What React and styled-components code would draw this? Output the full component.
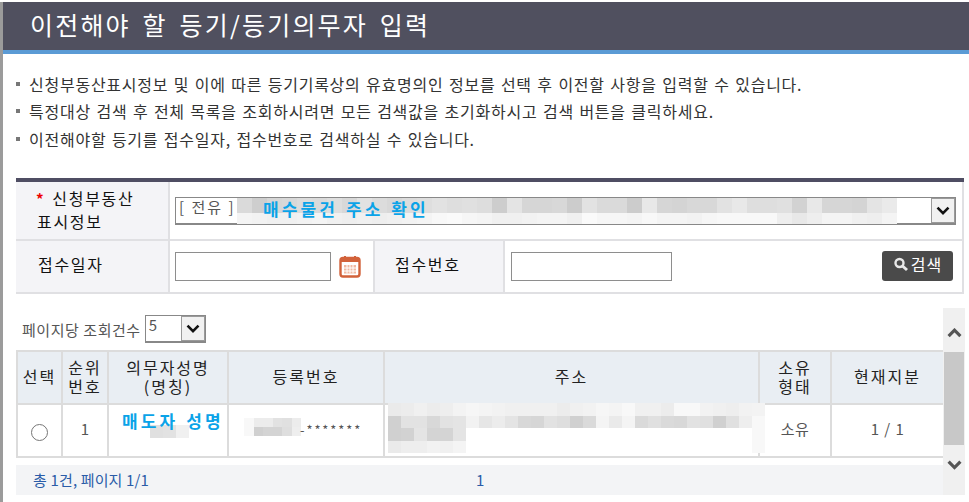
import React from "react";
import styled, { createGlobalStyle } from "styled-components";

const GlobalStyle = createGlobalStyle`
  html, body {
    margin: 0;
    padding: 0;
    background: #fff;
    overflow: hidden;
  }
  * {
    box-sizing: border-box;
  }
  body {
    font-family: "Noto Sans CJK KR", "Noto Sans", sans-serif;
    color: #333;
  }
`;

// styles
const Frame = styled.div`
  margin-top: 2px;
  width: 969px;
  height: 500px;
  border-left: 3px solid #9b9b9b;
  overflow: hidden;
`;
const Header = styled.h1`
  margin: 0;
  height: 52px;
  padding: 0 0 0 27px;
  background: #50505f;
  border-bottom: 4px solid #5b9bd5;
  color: #fff;
  font-size: 25px;
  font-weight: 400;
  letter-spacing: 2.2px;
  word-spacing: 4px;
  line-height: 44px;
`;
const Notes = styled.ul`
  list-style: none;
  margin: 0;
  padding: 16px 0 0 13px;
  height: 124px;
`;
const Note = styled.li`
  display: flex;
  align-items: center;
  gap: 9px;
  height: 27.5px;
  font-size: 16px;
  letter-spacing: 0.75px;
  word-spacing: 1.2px;
  color: #333;
  white-space: nowrap;
  &::before {
    content: "";
    width: 4px;
    height: 4px;
    background: #777;
    flex: none;
  }
`;
const SearchForm = styled.table`
  margin-left: 13px;
  width: 948px;
  height: 116px;
  table-layout: fixed;
  border-collapse: collapse;
  border-top: 4px solid #4f4e63;
  border-bottom: 2px solid #5a5a66;
  border-right: 1px solid #ddd;
`;
const Label = styled.th`
  height: 53px;
  background: #f4f4f7;
  border: 2px solid #e0e0e3;
  border-left: 0;
  font-size: 16px;
  font-weight: 400;
  letter-spacing: 1.7px;
  line-height: 22px;
  text-align: left;
  padding: 0 0 5px 22px;
  color: #111;
`;
const TallLabel = styled(Label)`
  height: 59px;
  padding: 0 0 1px 21px;
`;
const WideLabel = styled(Label)`
  padding-left: 20px;
`;
const Star = styled.span`
  color: #e00;
  font-size: 15px;
  font-weight: 700;
  margin: 0 7px 0 -1px;
`;
const FieldCell = styled.td`
  border: 2px solid #e0e0e3;
  border-top: ${(p) => (p.$first ? 0 : "2px solid #e0e0e3")};
  padding: ${(p) => (p.$first ? "1px" : "0")} 0 0 ${(p) => p.$inset || 5}px;
`;
const FieldRow = styled.div`
  display: flex;
  align-items: center;
  gap: 8px;
`;
const SplitRow = styled(FieldRow)`
  justify-content: space-between;
  padding-right: 9px;
`;
const SelectBox = styled.div`
  position: relative;
  display: flex;
  justify-content: space-between;
  align-items: stretch;
  width: ${(p) => p.$width}px;
  height: ${(p) => p.$height}px;
  border: 1px solid #888;
  border-bottom-width: 2px;
  background: #fff;
  color: #555;
  font-size: 15px;
  letter-spacing: 2px;
  line-height: 18px;
  padding-left: 3px;
`;
const SelectArrow = styled.span`
  display: flex;
  align-items: center;
  justify-content: center;
  width: 24px;
  background: #f1f1f1;
  border: 1px solid #9a9a9a;
  color: #111;
`;
const TextInput = styled.input`
  width: ${(p) => p.$width}px;
  height: 29px;
  border: 1px solid #8e8e8e;
  background: #fff;
`;
const SearchButton = styled.button`
  display: flex;
  align-items: center;
  justify-content: center;
  gap: 2px;
  width: 71px;
  height: 30px;
  padding: 0 0 4px;
  border: 0;
  border-radius: 3px;
  background: #4a4a4a;
  color: #fff;
  font-family: inherit;
  font-size: 16px;
  letter-spacing: 1px;
`;
const Mosaic = styled.div`
  position: absolute;
  top: ${(p) => p.$top}px;
  left: ${(p) => p.$left}px;
  display: grid;
  grid-auto-rows: ${(p) => p.$h};
  grid-template-columns: repeat(${(p) => p.$cols}, ${(p) => p.$w}px);
`;
const Pixel = styled.i`
  display: block;
  background: ${(p) => p.$c};
`;
const Callout = styled.strong`
  position: absolute;
  top: ${(p) => p.$top}px;
  left: ${(p) => p.$left}px;
  color: #0aa3e8;
  font-size: 17px;
  font-weight: 700;
  letter-spacing: 3.1px;
  word-spacing: 1px;
  line-height: 18px;
  white-space: nowrap;
`;
const ResultArea = styled.div`
  display: flex;
  align-items: flex-start;
  margin: 14px 0 0 13px;
`;
const ResultMain = styled.div`
  width: 927px;
`;
const PageSize = styled.div`
  display: flex;
  align-items: center;
  gap: 4px;
  height: 35px;
  margin-bottom: 7px;
  padding: 7px 0 0 6px;
  font-size: 15px;
  letter-spacing: 0.55px;
  color: #555;
`;
const GridTable = styled.table`
  width: 927px;
  height: 108px;
  table-layout: fixed;
  border-collapse: collapse;
  border: 2px solid #dcdcdc;
`;
const HeadCell = styled.th`
  height: 53px;
  padding: 0 0 2px;
  background: #e9eef3;
  border: 2px solid #dcdcdc;
  font-size: 16px;
  font-weight: 400;
  letter-spacing: 2px;
  line-height: 19px;
  color: #222;
`;
const BodyCell = styled.td`
  position: relative;
  padding: 0 0 4px;
  border: 2px solid #dcdcdc;
  font-size: 15px;
  letter-spacing: 0.4px;
  word-spacing: 1px;
  text-align: center;
  color: #555;
`;
const Radio = styled.input`
  appearance: none;
  display: block;
  width: 17px;
  height: 17px;
  margin: 8px 0 0 13px;
  border: 1.5px solid #767676;
  border-radius: 50%;
  background: #fff;
`;
const Masked = styled.span`
  position: absolute;
  top: 15px;
  left: 71px;
  font-size: 13px;
  letter-spacing: 1.9px;
  color: #555;
`;
const Pager = styled.div`
  display: flex;
  align-items: center;
  height: 30px;
  margin-top: 7px;
  padding: 0 0 2px 17px;
  background: #f3f4f6;
  color: #2a5ca8;
  font-size: 15px;
  letter-spacing: 0.15px;
`;
const PagerTotal = styled.span`
  width: 443px;
`;
const Scrollbar = styled.div`
  display: flex;
  flex-direction: column;
  align-items: center;
  width: 22px;
  height: 187px;
  background: #f0f0f0;
  color: #555;
`;
const ScrollEnd = styled.div`
  display: flex;
  justify-content: center;
  align-items: ${(p) => (p.$down ? "flex-start" : "flex-end")};
  height: ${(p) => p.$height}px;
  width: 100%;
  padding: ${(p) => (p.$down ? "15px 0 0" : "0 0 14px")};
`;
const ScrollThumb = styled.div`
  width: 20px;
  height: 93px;
  background: #c8c8c8;
`;

// drawings
const Chevron = ({ up, size = 14, weight = 2.6 }) => (
  <svg width={size} height={size * 0.65} viewBox="0 0 14 9" fill="none">
    <path
      d={up ? "M1.5 7.5 7 2l5.5 5.5" : "M1.5 1.5 7 7l5.5-5.5"}
      stroke="currentColor"
      strokeWidth={weight}
    />
  </svg>
);

const CalendarIcon = () => (
  <svg width="22" height="23" viewBox="0 0 22 23" fill="none">
    <rect x="1.5" y="3" width="19" height="18.5" rx="2.5" stroke="#d2623a" strokeWidth="2.4" />
    <rect x="1" y="3" width="20" height="4" fill="#d2623a" />
    <path d="M6 1v4M16 1v4" stroke="#d2623a" strokeWidth="2" />
    <rect x="5" y="10" width="12" height="8.5" fill="#f0b9a2" />
    <path
      d="M5 13h12M5 16h12M8 10v8.5M11 10v8.5M14 10v8.5"
      stroke="#fff"
      strokeWidth="1"
    />
  </svg>
);

const SearchIcon = () => (
  <svg width="16" height="15" viewBox="0 0 16 15" fill="none">
    <circle cx="6.5" cy="6" r="4" stroke="#e8e8e8" strokeWidth="2.4" />
    <path d="m9.5 9 4.5 4" stroke="#e8e8e8" strokeWidth="3" />
  </svg>
);

const gray = (v) => `rgb(${v},${v},${v})`;

const Pixels = ({ rows, w, h, top, left }) => (
  <Mosaic $w={w} $h={h} $top={top} $left={left} $cols={rows[0].length}>
    {rows.flat().map((v, i) => (
      <Pixel key={i} $c={gray(v)} />
    ))}
  </Mosaic>
);

// data
const selectMosaic = [
  [218, 206, 214, 216, 220, 218, 222, 216, 226, 220, 216, 220, 222, 226, 222, 224, 221, 205, 228, 214, 214, 216, 204, 226, 218, 218, 204, 232, 214, 212, 216, 216, 226, 232, 222, 222, 224, 210, 232, 214, 214, 212, 228, 234],
  [244, 242, 240, 240, 242, 244, 240, 238, 240, 238, 240, 242, 244, 248, 250, 246, 244, 240, 240, 242, 244, 244, 240, 250, 246, 246, 244, 248, 244, 244, 242, 246, 248, 248, 248, 248, 238, 232, 238, 244, 244, 240, 238, 244],
];
const addressMosaic = [
  [234, 236, 240, 236, 238, 243, 246, 244, 242, 240, 240, 240, 240, 236, 240, 242, 246, 244, 248, 240, 240, 236, 248, 248, 242, 240, 238, 242, 243],
  [208, 226, 226, 216, 226, 228, 242, 230, 236, 228, 216, 214, 226, 222, 208, 218, 244, 234, 244, 218, 224, 218, 216, 226, 224, 208, 224, 238, 248],
  [208, 210, 228, 212, 212, 228, 255, 255, 255, 255, 255, 255, 255, 255, 255, 255, 255, 255, 255, 255, 255, 255, 255, 255, 255, 255, 255, 255, 248],
  [234, 238, 238, 242, 240, 244, 255, 255, 255, 255, 255, 255, 255, 255, 255, 255, 255, 255, 255, 255, 255, 255, 255, 255, 255, 255, 255, 255, 248],
];
const nameMosaic = [[224, 226, 240]];
const regMosaic = [
  [248, 236, 236, 226, 224, 236],
  [248, 208, 212, 212, 222, 238],
];

const columns = [
  { width: 45, label: "선택" },
  { width: 46, label: ["순위", "번호"] },
  { width: 120, label: ["의무자성명", "(명칭)"] },
  { width: 156, label: "등록번호" },
  { width: 375, label: "주소" },
  { width: 72, label: ["소유", "형태"] },
  { width: 113, label: "현재지분" },
];

const notes = [
  "신청부동산표시정보 및 이에 따른 등기기록상의 유효명의인 정보를 선택 후 이전할 사항을 입력할 수 있습니다.",
  "특정대상 검색 후 전체 목록을 조회하시려면 모든 검색값을 초기화하시고 검색 버튼을 클릭하세요.",
  "이전해야할 등기를 접수일자, 접수번호로 검색하실 수 있습니다.",
];

// markup
const App = () => {
  return (
    <Frame>
      <GlobalStyle />
      <Header>이전해야 할 등기/등기의무자 입력</Header>
      <Notes>
        {notes.map((note) => (
          <Note key={note}>{note}</Note>
        ))}
      </Notes>
      <SearchForm>
        <colgroup>
          <col width="153" />
          <col width="205" />
          <col width="130" />
          <col />
        </colgroup>
        <tbody>
          <tr>
            <TallLabel>
              <Star>*</Star>신청부동산
              <br />
              표시정보
            </TallLabel>
            <FieldCell colSpan={3} $first>
              <SelectBox $width={781} $height={28}>
                [ 전유 ]
                <Pixels rows={selectMosaic} w={15} h="15px 11px" top={0} left={61} />
                <Callout $top={2} $left={87}>
                  매수물건 주소 확인
                </Callout>
                <SelectArrow>
                  <Chevron />
                </SelectArrow>
              </SelectBox>
            </FieldCell>
          </tr>
          <tr>
            <Label>접수일자</Label>
            <FieldCell>
              <FieldRow>
                <TextInput $width={156} />
                <CalendarIcon />
              </FieldRow>
            </FieldCell>
            <WideLabel>접수번호</WideLabel>
            <FieldCell $inset={6}>
              <SplitRow>
                <TextInput $width={161} />
                <SearchButton>
                  <SearchIcon />
                  검색
                </SearchButton>
              </SplitRow>
            </FieldCell>
          </tr>
        </tbody>
      </SearchForm>
      <ResultArea>
        <ResultMain>
          <PageSize>
            페이지당 조회건수
            <SelectBox $width={61} $height={28}>
              5
              <SelectArrow>
                <Chevron />
              </SelectArrow>
            </SelectBox>
          </PageSize>
          <GridTable>
            <colgroup>
              {columns.map((col, i) => (
                <col key={i} width={col.width} />
              ))}
            </colgroup>
            <thead>
              <tr>
                {columns.map((col, i) => (
                  <HeadCell key={i}>
                    {Array.isArray(col.label) ? (
                      <>
                        {col.label[0]}
                        <br />
                        {col.label[1]}
                      </>
                    ) : (
                      col.label
                    )}
                  </HeadCell>
                ))}
              </tr>
            </thead>
            <tbody>
              <tr>
                <BodyCell>
                  <Radio type="radio" name="pick" />
                </BodyCell>
                <BodyCell>1</BodyCell>
                <BodyCell>
                  <Pixels rows={nameMosaic} w={13} h="13px" top={20} left={41} />
                  <Callout $top={7} $left={13}>
                    매도자 성명
                  </Callout>
                </BodyCell>
                <BodyCell>
                  <Pixels rows={regMosaic} w={9.5} h="9px" top={13} left={15} />
                  <Masked>-*******</Masked>
                </BodyCell>
                <BodyCell>
                  <Pixels rows={addressMosaic} w={13} h="12.5px" top={-2} left={3} />
                </BodyCell>
                <BodyCell>소유</BodyCell>
                <BodyCell>1 / 1</BodyCell>
              </tr>
            </tbody>
          </GridTable>
          <Pager>
            <PagerTotal>총 1건, 페이지 1/1</PagerTotal>
            <span>1</span>
          </Pager>
        </ResultMain>
        <Scrollbar>
          <ScrollEnd $height={44}>
            <Chevron up size={15} weight={3} />
          </ScrollEnd>
          <ScrollThumb />
          <ScrollEnd $height={50} $down>
            <Chevron size={15} weight={3} />
          </ScrollEnd>
        </Scrollbar>
      </ResultArea>
    </Frame>
  );
};

export default App;
